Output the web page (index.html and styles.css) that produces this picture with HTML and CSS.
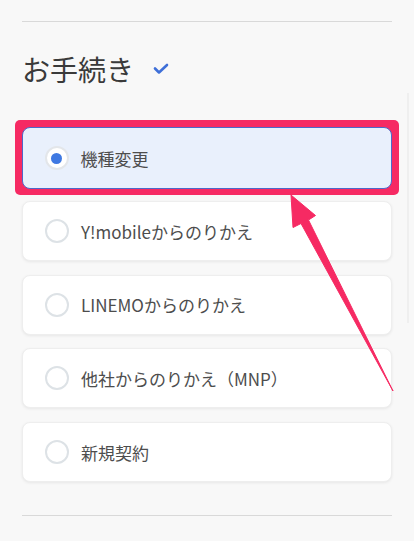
FILE: index.html
```html
<!DOCTYPE html>
<html lang="ja">
<head>
<meta charset="utf-8">
<link rel="stylesheet" href="styles.css">
</head>
<body>
<div class="page">
  <hr class="divider top">
  <h2 class="heading">お手続き
    <svg class="check" width="16" height="12" viewBox="0 0 16 12"><path d="M2 5.5 L6 9.5 L14 2" fill="none" stroke="#3e6fd8" stroke-width="2.6" stroke-linecap="round" stroke-linejoin="round"/></svg>
  </h2>
  <div class="options">
    <div class="highlight">
      <div class="card selected"><span class="radio on"></span><span class="label">機種変更</span></div>
    </div>
    <div class="card first-after"><span class="radio"></span><span class="label">Y!mobileからのりかえ</span></div>
    <div class="card"><span class="radio"></span><span class="label">LINEMOからのりかえ</span></div>
    <div class="card"><span class="radio"></span><span class="label">他社からのりかえ（MNP）</span></div>
    <div class="card"><span class="radio"></span><span class="label">新規契約</span></div>
  </div>
  <hr class="divider bottom">
  <div class="scrolltrack"></div>
  <svg class="arrow" width="414" height="541" viewBox="0 0 414 541">
    <polygon points="291,195 315.5,215.5 308.5,220 393,391 301,223.5 293,227.5" fill="#f62a63" stroke="#f62a63" stroke-width="1" stroke-linejoin="round"/>
  </svg>
</div>
</body>
</html>
```

FILE: styles.css
```css
html, body {
  margin: 0;
  padding: 0;
  background: #f8f8f8;
}
body {
  font-family: "Noto Sans CJK JP", "Noto Sans", sans-serif;
  color: #3a3a3a;
  width: 414px;
  height: 541px;
  overflow: hidden;
}
.page {
  position: relative;
  padding: 21px 22px 0 22px;
  height: 541px;
  box-sizing: border-box;
}
.divider {
  border: 0;
  height: 1px;
  background: #d9d9d9;
  margin: 0;
}
.heading {
  margin: 27px 0 0 0;
  font-size: 28px;
  line-height: 40px;
  font-weight: 400;
  color: #3a3a3a;
  display: flex;
  align-items: center;
  gap: 19px;
}
.check {
  display: block;
  margin-top: 0;
}
.options {
  display: flex;
  flex-direction: column;
  margin-top: 31px;
}
.highlight {
  background: #f62a63;
  border-radius: 5px;
  padding: 7px 7px 6px 7px;
  margin: 0 -7px;
}
.card {
  background: #fff;
  border: 1px solid #eeeeee;
  border-radius: 8px;
  height: 60px;
  box-sizing: border-box;
  display: flex;
  align-items: center;
  padding-left: 22px;
  gap: 12px;
  box-shadow: 0 1px 3px rgba(0,0,0,0.07);
  margin-top: 13.7px;
}
.card.first-after {
  margin-top: 6px;
}
.card.selected {
  margin-top: 0;
  height: 62px;
  background: #e9f0fc;
  border: 1.5px solid #4d68c9;
  box-shadow: none;
  padding-left: 21.5px;
}
.radio {
  width: 24px;
  height: 24px;
  border-radius: 50%;
  border: 2px solid #dde2e6;
  background: #fff;
  box-sizing: border-box;
  display: flex;
  align-items: center;
  justify-content: center;
  flex: none;
}
.radio.on {
  border-color: #e3e6ea;
}
.radio.on::after {
  content: "";
  width: 11px;
  height: 11px;
  border-radius: 50%;
  background: #3f79e2;
}
.label {
  font-size: 17px;
  color: #4d4d4d;
}
.divider.bottom {
  margin-top: 33px;
}
.scrolltrack {
  position: absolute;
  left: 407px;
  top: 93px;
  width: 2px;
  height: 230px;
  background: #efefef;
}
.arrow {
  position: absolute;
  left: 0;
  top: 0;
  pointer-events: none;
}
```
